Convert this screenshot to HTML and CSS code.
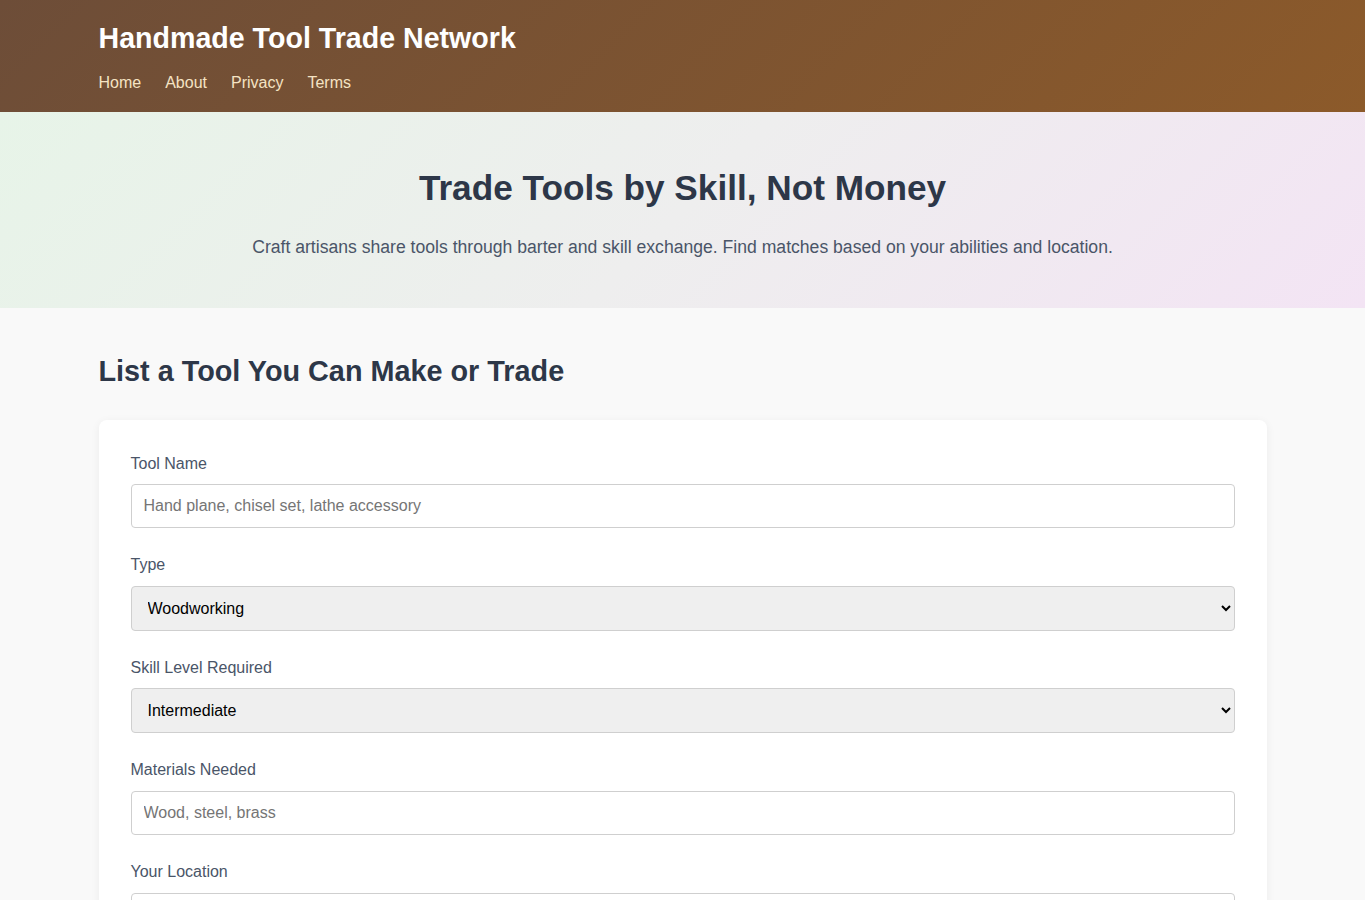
FILE: index.html
```
<html>
  <head>
    <meta charset="utf-8">
    <link rel="stylesheet" href="styles.css">
    <title>Handmade Tool Trade Network</title>
  </head>
  <body>
    <header class="site-header">
      <div class="wrap">
        <h1 class="brand">Handmade Tool Trade Network</h1>
        <nav class="nav">
          <a href="#">Home</a>
          <a href="#">About</a>
          <a href="#">Privacy</a>
          <a href="#">Terms</a>
        </nav>
      </div>
    </header>

    <section class="hero">
      <div class="wrap">
        <h2 class="hero-title">Trade Tools by Skill, Not Money</h2>
        <p class="hero-text">Craft artisans share tools through barter and skill exchange. Find matches based on your abilities and location.</p>
      </div>
    </section>

    <main class="main">
      <div class="wrap">
        <h2 class="section-title">List a Tool You Can Make or Trade</h2>
        <form class="card">
          <div class="field">
            <label for="tool">Tool Name</label>
            <input id="tool" type="text" placeholder="Hand plane, chisel set, lathe accessory">
          </div>
          <div class="field">
            <label for="type">Type</label>
            <select id="type">
              <option>Woodworking</option>
              <option>Metalworking</option>
              <option>Leatherworking</option>
              <option>Pottery</option>
            </select>
          </div>
          <div class="field">
            <label for="level">Skill Level Required</label>
            <select id="level">
              <option>Beginner</option>
              <option selected>Intermediate</option>
              <option>Advanced</option>
            </select>
          </div>
          <div class="field">
            <label for="materials">Materials Needed</label>
            <input id="materials" type="text" placeholder="Wood, steel, brass">
          </div>
          <div class="field">
            <label for="location">Your Location</label>
            <input id="location" type="text" placeholder="City, region">
          </div>
          <button class="btn" type="submit">List Tool</button>
        </form>
      </div>
    </main>
  </body>
</html>
```

FILE: styles.css
```
body {
  margin: 0;
  font-family: "Liberation Sans", Arial, sans-serif;
  color: #2d3748;
  background: #f9f9f9;
}

.wrap {
  max-width: 1200px;
  margin: 0 auto;
  padding: 0 16px;
  box-sizing: border-box;
}

/* header */
.site-header {
  background: linear-gradient(135deg, #6d4d38 0%, #8c5a2a 100%);
  padding: 21px 0 17px;
}

.brand {
  margin: 0;
  font-size: 28.6px;
  line-height: 1.2;
  color: #fff;
}

.nav {
  display: flex;
  gap: 24px;
  margin-top: 16px;
  line-height: 24px;
}

.nav a {
  color: #f5e3c3;
  text-decoration: none;
  font-size: 16px;
}

/* hero */
.hero {
  background: linear-gradient(135deg, #e7f4e8 0%, #eeeeee 50%, #f3e4f4 100%);
  padding: 55px 0 48px;
  text-align: center;
}

.hero-title {
  margin: 0 0 24px;
  font-size: 35.2px;
  line-height: 1.2;
  color: #2d3748;
}

.hero-text {
  margin: 0;
  font-size: 17.6px;
  line-height: 1.5;
  color: #4a5568;
}

/* form */
.main {
  padding: 48px 0 48px;
}

.section-title {
  margin: 0 0 32px;
  font-size: 28.8px;
  line-height: 1.1;
  color: #2d3748;
}

.card {
  background: #fff;
  border-radius: 8px;
  box-shadow: 0 2px 10px rgba(0, 0, 0, 0.06);
  padding: 31px 32px 32px;
}

.field {
  margin-bottom: 24px;
}

.field label {
  display: block;
  font-size: 16px;
  line-height: 1.6;
  color: #4a5568;
  margin-bottom: 8px;
}

.field input,
.field select {
  display: block;
  width: 100%;
  box-sizing: border-box;
  font-family: "Liberation Sans", Arial, sans-serif;
  font-size: 16px;
  padding: 12px;
  border: 1px solid #cfcfcf;
  border-radius: 4px;
  color: #000;
}

.field input::placeholder {
  color: #757575;
}

.field select {
  background-color: #efefef;
  height: 45px;
}

.btn {
  font-family: "Liberation Sans", Arial, sans-serif;
  font-size: 16px;
  padding: 12px 24px;
  border: 0;
  border-radius: 4px;
  background: #8b5a2b;
  color: #fff;
}
```
